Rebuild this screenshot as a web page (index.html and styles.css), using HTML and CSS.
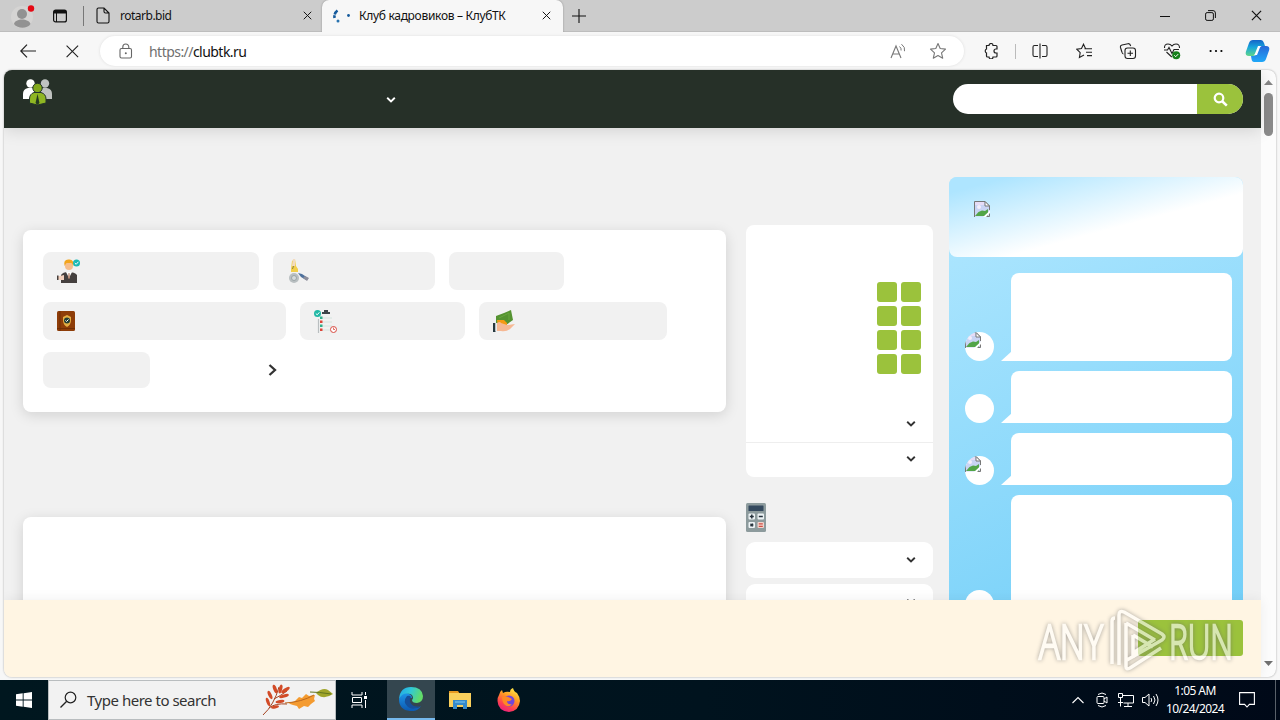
FILE: index.html
```html
<!DOCTYPE html>
<html lang="ru">
<head>
<meta charset="utf-8">
<title>Клуб кадровиков – КлубТК</title>
<link rel="stylesheet" href="styles.css">
</head>
<body>
<svg width="0" height="0" class="defs">
  <defs>
    <linearGradient id="cp1" x1="0" y1="0" x2="0" y2="1"><stop offset="0" stop-color="#1464c8"/><stop offset=".45" stop-color="#17a5dc"/><stop offset="1" stop-color="#5fd68a"/></linearGradient>
    <linearGradient id="cp2" x1="0" y1="0" x2="0" y2="1"><stop offset="0" stop-color="#2868d8"/><stop offset="1" stop-color="#20a8f8"/></linearGradient>
    <linearGradient id="eg1" x1="0" y1="0" x2="1" y2=".3"><stop offset="0" stop-color="#20a4e8"/><stop offset=".5" stop-color="#30c8d8"/><stop offset="1" stop-color="#62dc68"/></linearGradient>
    <linearGradient id="eg2" x1="0" y1="0" x2="0" y2="1"><stop offset="0" stop-color="#1d93e6"/><stop offset="1" stop-color="#0c58b0"/></linearGradient>
    <linearGradient id="ff" x1=".8" y1="0" x2=".3" y2="1"><stop offset="0" stop-color="#fff04a"/><stop offset=".4" stop-color="#ff9a24"/><stop offset=".75" stop-color="#ff4050"/><stop offset="1" stop-color="#e82080"/></linearGradient>
    <symbol id="down" viewBox="0 0 10 8"><path d="M1.2 1.8 5 5.4 8.8 1.8" fill="none" stroke="currentColor" stroke-width="1.9"/></symbol>
    <symbol id="broken" viewBox="0 0 16 16"><path d="M.5 .5h10.500l4.500 4.500v10.500H.5z" fill="#c9d4f4"/><path d="M1 1h9v3H1z" fill="#e6dcf6"/><path d="M1 15 4.500 11 8 9.500l3 .5 3-2v7z" fill="#52a548"/><circle cx="5" cy="6" r="2" fill="#f4eefb"/><path d="M.5 16V.5h10.500l4.500 4.500v4M15.500 12v3.500H10" fill="none" stroke="#777"/><path d="M11 .5V5h4.500z" fill="#fff" stroke="#777"/><path d="m9 16 7-6.500v2.500l-4 4z" fill="#fff"/></symbol>
    <symbol id="x" viewBox="0 0 12 12"><path d="m1 1 10 10M11 1 1 11" fill="none" stroke="#111" stroke-width="1.300"/></symbol>
  </defs>
</svg>

<header class="tabs">
  <svg class="avatar" width="26" height="28"><circle cx="12" cy="15" r="11" fill="#d5d4d3"/><circle cx="12" cy="12" r="5" fill="#929292"/><path d="M4 22c1-6 15-6 16.500 0-3 5-13 5-16.500 0z" fill="#929292"/><circle cx="21" cy="6.500" r="3.200" fill="#e50914"/></svg>
  <svg class="workspaces" width="16" height="16"><rect x="1.600" y="2.100" width="12.800" height="11.800" rx="2" fill="none" stroke="#111" stroke-width="1.200"/><path d="M2 2h12v3.500H2z" fill="#111"/><path d="M4.500 5v9" stroke="#111"/></svg>
  <i class="tab-rule"></i>
  <svg class="file" width="14" height="18"><path d="M1 2.500Q1 1 2.500 1H8l5 5v8.500q0 1.500-1.500 1.500h-9Q1 16 1 14.500zM8 1v3.500Q8 6 9.500 6H13" fill="none" stroke="#111" stroke-width="1.100"/></svg>
  <span class="tab-name rotarb">rotarb.bid</span>
  <svg class="close1" width="9" height="9"><use href="#x"/></svg>
  <div class="tab">
    <svg width="20" height="16"><path d="M6.500 2.500Q3 5 3.500 10" fill="none" stroke="#155a9c" stroke-width="2.600" stroke-dasharray="5 .7"/><circle cx="7" cy="13" r="1.500" fill="#2873af"/><circle cx="17.500" cy="7.500" r="1.400" fill="#155a9c"/></svg>
    <span class="tab-name">Клуб кадровиков – КлубТК</span>
    <svg class="close2" width="9" height="9"><use href="#x"/></svg>
  </div>
  <svg class="plus" width="14" height="14"><path d="M7 0v14M0 7h14" stroke="#111" stroke-width="1.100"/></svg>
  <div class="winbtns">
    <svg width="10" height="10"><path d="M0 5.500h10" stroke="#111"/></svg>
    <svg width="11" height="11"><rect x=".6" y="2.600" width="7.800" height="7.800" rx="1.500" fill="none" stroke="#111"/><path d="M3 .6h5Q10.400.6 10.400 3v5" fill="none" stroke="#111"/></svg>
    <svg width="11" height="11"><use href="#x"/></svg>
  </div>
</header>

<nav class="toolbar">
  <svg class="back" width="16" height="14"><path d="M16 7H.8M7 .7.8 7 7 13.300" fill="none" stroke="#222" stroke-width="1.200"/></svg>
  <svg class="stop" width="13" height="13"><path d="m.6.6 11.500 11.500M12.100.6.6 12.100" fill="none" stroke="#222" stroke-width="1.100"/></svg>
  <div class="address">
    <svg width="14" height="16"><rect x="1" y="5.500" width="11.500" height="9.500" rx="1.500" fill="none" stroke="#666" stroke-width="1.100"/><path d="M3.800 5.500V4a3 3 0 0 1 6 0v1.500" fill="none" stroke="#666" stroke-width="1.100"/><circle cx="6.800" cy="10.300" r="1" fill="#666"/></svg>
    <span class="url"><span>https://</span>clubtk.ru</span>
    <svg class="read" width="17" height="16"><path d="M1 15 6 3l5 12M2.800 11h6.400" fill="none" stroke="#777" stroke-width="1.100"/><path d="M9.500 3.500q2 1.500 1.600 4M11.500 1.200q4 3 3 7" fill="none" stroke="#777"/></svg>
    <svg class="star" width="18" height="18"><path d="m9 1.500 2.200 5 5.300.6-4 3.700 1.200 5.400L9 13.500l-4.700 2.700 1.200-5.400-4-3.700 5.300-.6z" fill="none" stroke="#777" stroke-width="1.100" stroke-linejoin="round"/></svg>
  </div>
  <div class="tools">
    <svg class="t1" width="16" height="16"><path d="M3.500 2.500H6a2 2 0 0 1 4 0h3q1 0 1 1V6h-1a2 2 0 0 0 0 4h1v3q0 1-1 1h-3a2 2 0 0 1-4 0H4.500q-1 0-1-1v-3a2.200 2.200 0 0 1 0-4z" fill="none" stroke="#222" stroke-width="1.200"/></svg>
    <i></i>
    <svg class="t2" width="16" height="16"><path d="M6 2.500H2.500q-1.500 0-1.500 1.500v8q0 1.500 1.500 1.500H6M10 2.500h3.500Q15 2.500 15 4v8q0 1.500-1.500 1.500H10M8 .5v15" fill="none" stroke="#222" stroke-width="1.100"/></svg>
    <svg class="t3" width="17" height="16"><path d="M9.500 5.500 7.500 1.200l-2 4.300-4.700.7 3.400 3.400-.8 4.900L8 12M8.500 5.800H16M10 9.200h6M11 12.600h5" fill="none" stroke="#222" stroke-width="1.100"/></svg>
    <svg class="t4" width="18" height="17"><rect x="6" y="5" width="10.500" height="10.500" rx="2.500" fill="none" stroke="#222" stroke-width="1.100"/><path d="M11.300 7.500v5.500M8.500 10.300H14M4.500 11q-1.200 0-1.600-2L1.500 4.500Q1 2.500 3 2l6-1.300q2-.4 2.700 2.300" fill="none" stroke="#222" stroke-width="1.100"/></svg>
    <svg class="t5" width="18" height="18"><path d="M1.500 6q-.2-4 3.500-4 2.500 0 4 2 1.500-2 4-2 3.600 0 3.500 4M3.500 10l5.300 5M1 8h3.500L6 5.500l3 6 2-4h5" fill="none" stroke="#222" stroke-width="1.100"/><circle cx="13.200" cy="13.300" r="4" fill="#16801b"/><path d="m11.300 13.300 1.400 1.400 2.500-2.600" fill="none" stroke="#fff"/></svg>
    <svg class="t6" width="14" height="4"><circle cx="1.600" cy="2" r="1.100"/><circle cx="7" cy="2" r="1.100"/><circle cx="12.400" cy="2" r="1.100"/></svg>
    <svg class="t7" width="25" height="24"><path d="M8 1h8q2 0 3 3l1 3h-4q-2 0-3 3l-2 5q-1 2-3 2H4Q0 17 .8 13L4 4q1-3 4-3z" fill="url(#cp1)"/><path d="M17 23H9q-2 0-2.500-3L6 17h3q2 0 3-3l2-5q1-2 3-2h4q4 0 3.200 4L21 20q-1 3-4 3z" fill="url(#cp2)"/><path d="M13 7h3q-1 1-2 4l-2 5H9q1-1 2-4z" fill="#fff"/></svg>
  </div>
</nav>

<main class="view">
  <div class="page">
    <div class="header">
      <svg class="logo" width="30" height="27"><circle cx="7.500" cy="4.500" r="4.200" fill="#fff"/><path d="M0 20v-5q0-5 5-6h5q4 1 4 6v5H2z" fill="#fff"/><circle cx="22" cy="4.500" r="4.200" fill="#bfc2c0"/><path d="M16 20v-5q0-5 4-6h4q5 1 5 6v5z" fill="#bfc2c0"/><circle cx="14.500" cy="9" r="4.700" fill="#83a91d" stroke="#24342a"/><path d="M6.500 24v-4q0-5 4.500-6.500h7q5 1.500 5 6.500v4L14.500 26z" fill="#8fb623" stroke="#24342a"/><path d="m14.500 15-2 9 2 2 2-2z" fill="#253a1f"/></svg>
      <svg class="menu-arrow" width="10" height="8"><use href="#down"/></svg>
      <div class="search"><span></span><b><svg width="15" height="15"><circle cx="6" cy="6" r="4.300" fill="none" stroke="#fff" stroke-width="2.200"/><path d="m9.200 9.200 4.600 4.400" stroke="#fff" stroke-width="2.600"/></svg></b></div>
    </div>

    <div class="content">
      <div class="left">
        <section class="card topics">
          <div class="chips">
            <span class="chip w216"><svg width="25" height="25"><path d="M4 24v-8q2-3 7-3 7 0 9 3v8z" fill="#45403f"/><path d="m9 13 3 6 3-6z" fill="#fff"/><path d="M11.500 14h1l.5 5-1 1-1-1z" fill="#b98b75"/><circle cx="12" cy="7" r="4" fill="#f6bd8b"/><path d="M7.500 7Q6 0 12 .5 17 0 16.500 7l-2-3h-5z" fill="#f2a51d"/><path d="M0 17h3l4-1v5H3l-3-1z" fill="#f3d0bd"/><path d="M0 16.500h1.500V21H0z" fill="#45403f"/><circle cx="19.500" cy="4" r="3.500" fill="#18b8b4"/><path d="m17.800 4 1.400 1.300 2.200-2.500" stroke="#fff" fill="none"/></svg></span>
            <span class="chip w162"><svg width="25" height="25"><path d="M4 2 7 0l1 7 2 3v3H3v-3z" fill="#f2cf4b"/><path d="M5 0h2v7H4z" fill="#f2dbc1"/><path d="m5.500 7-1 3" stroke="#8c8043"/><circle cx="6" cy="19" r="5" fill="#b9bfc1"/><circle cx="6" cy="19" r="2.500" fill="#d5dadb" stroke="#9ba4a7"/><path d="m10 14 4 1 6 4-2 2-5-3z" fill="#4e719d"/><path d="m17 17 4 2-2 3-4-3z" fill="#8d8e9b"/></svg></span>
            <span class="chip w115"></span>
            <span class="chip w243"><svg width="25" height="25"><rect y="2" width="18" height="20" rx="1.500" fill="#8e3d08"/><path d="M3 2v20M0 19.500h18" stroke="#6f2c05" stroke-width=".9"/><path d="m6 8 4-2 4 2v3q0 5-4 7-4-2-4-7z" fill="#e4ae43"/><circle cx="10" cy="11.500" r="3" fill="#253f35"/><path d="m8.500 11.500 1 1 2-2" stroke="#fff" fill="none"/></svg></span>
            <span class="chip w165"><svg width="25" height="25"><circle cx="3.500" cy="4.500" r="3.500" fill="#20b8a5"/><path d="m1.800 4.500 1.400 1.300 2.200-2.500" stroke="#fff" fill="none"/><path d="M8 4V3h2V1h4v2h2v2H8z" fill="#3d4449"/><path d="M4.500 10v14" stroke="#b9bec0" stroke-width="1.200"/><path d="M8 9h10M8 13h10M8 17h10M8 21h8" stroke="#cfe2dc" stroke-width=".8"/><path d="M6 7.500h2.500V10H6zM6 15.500h2.500V18H6z" fill="#31ae8a"/><path d="M6 11.500h2.500V14H6zM6 19.500h2.500V22H6z" fill="#dd4438"/><circle cx="19.500" cy="20.500" r="3" fill="#fff" stroke="#d84b42"/><path d="M19.500 18.500v2h1.500" stroke="#d84b42" fill="none" stroke-width=".8"/></svg></span>
            <span class="chip w188"><svg width="25" height="25"><path d="m3 7 8-3 7-3 2 10-7 5H3z" fill="#559331"/><path d="m6 9 10-5v7" stroke="#68a63d" fill="none"/><path d="M4 11h7l3 3v3H5z" fill="#f49a13"/><path d="M4 14q3-2 4 0l6 2 8-1-5 5q-4 3-9 2H4z" fill="#f6b893"/><path d="M0 14h2.500v9H0z" fill="#273940"/><path d="M2.500 14H4v8H2.500z" fill="#e9edef"/></svg></span>
            <span class="chip w107"></span>
            <svg class="next" width="10" height="12"><path d="m1.500 1 5.500 5-5.500 5" fill="none" stroke="#333" stroke-width="2.300"/></svg>
          </div>
        </section>
        <section class="card feed"></section>
      </div>

      <aside class="mid">
        <section class="calendar">
          <div class="grid"><i></i><i></i><i></i><i></i><i></i><i></i><i></i><i></i></div>
          <div class="fold first"><svg width="10" height="8"><use href="#down"/></svg></div>
          <div class="fold"><svg width="10" height="8"><use href="#down"/></svg></div>
        </section>
        <svg class="calc" width="20" height="29"><rect width="20" height="29" rx="1.500" fill="#8d9b9d"/><rect x="2.500" y="2.500" width="15" height="5.500" rx=".5" fill="#34495e"/><rect x="2.500" y="10.500" width="6.500" height="6" rx="1" fill="#edf3f5"/><rect x="11.500" y="10.500" width="6.500" height="6" rx="1" fill="#edf3f5"/><rect x="2.500" y="19" width="6.500" height="6" rx="1" fill="#edf3f5"/><rect x="11.500" y="19" width="6.500" height="6" rx="1" fill="#f2d2cb"/><path d="M3.800 13.500h4M5.800 11.500v4M12.800 13.500h4" stroke="#26323c" stroke-width="1.500"/><path d="m4.500 20.700 2.600 2.600M7.100 20.700l-2.600 2.600" stroke="#26323c" stroke-width="1.500"/><path d="M12.800 20.900h4M12.800 23.300h4" stroke="#cf5146" stroke-width="1.200"/></svg>
        <div class="accordion"><svg width="10" height="8"><use href="#down"/></svg></div>
        <div class="accordion"><svg width="10" height="8"><use href="#down"/></svg></div>
      </aside>

      <aside class="chat">
        <div class="chat-head"><svg width="16" height="16"><use href="#broken"/></svg></div>
        <div class="message m88"><span class="face"><svg width="16" height="16"><use href="#broken"/></svg></span><p></p></div>
        <div class="message m52"><span class="face"></span><p></p></div>
        <div class="message m52"><span class="face"><svg width="16" height="16"><use href="#broken"/></svg></span><p></p></div>
        <div class="message m124"><span class="face"></span><p></p></div>
      </aside>
    </div>

    <div class="cookie"><span class="accept"></span></div>
  </div>
  <div class="scroll">
    <svg width="9" height="5"><path d="M0 5 4.500 0 9 5z" fill="#858585"/></svg>
    <i></i>
    <svg class="sdown" width="9" height="5"><path d="m0 0 4.500 5L9 0z" fill="#707070"/></svg>
  </div>
</main>

<footer class="taskbar">
  <div class="start"><svg width="16" height="16"><path d="m0 2.300 6.700-1v6.200H0zM7.600 1.200 16 0v7.500H7.600zM0 8.500h6.700v6.200L0 13.700zM7.600 8.500H16V16l-8.400-1.200z" fill="#fff"/></svg></div>
  <div class="tsearch">
    <svg width="18" height="18"><circle cx="10.500" cy="6.500" r="5.300" fill="none" stroke="#222" stroke-width="1.200"/><path d="M6.700 10.300.5 16.500" stroke="#222" stroke-width="1.300"/></svg>
    <span>Type here to search</span>
    <svg class="leaves" width="72" height="34" viewBox="0 0 72 34"><g fill="none" stroke="#a54422"><path d="M1 32Q12 22 17 4M7 25q6-5 18-4M12 16q6-3 13-8"/></g><g fill="#d24b27"><ellipse cx="13" cy="6" rx="1.800" ry="4.500" transform="rotate(-20 13 6)"/><ellipse cx="18.500" cy="6" rx="1.700" ry="4.500" transform="rotate(15 18.500 6)"/><ellipse cx="23.500" cy="7" rx="1.700" ry="5" transform="rotate(55 23.500 7)"/><ellipse cx="22" cy="13" rx="1.600" ry="5" transform="rotate(75 22 13)"/><ellipse cx="8" cy="12" rx="1.700" ry="4.500" transform="rotate(-25 8 12)"/><ellipse cx="6" cy="19" rx="1.600" ry="4.500" transform="rotate(-20 6 19)"/><ellipse cx="18" cy="18.500" rx="1.600" ry="4.500" transform="rotate(80 18 18.500)"/><ellipse cx="13" cy="24" rx="1.500" ry="4" transform="rotate(80 13 24)"/></g><path d="M27 20l6-2 4-4 3 1 4-4 3 2 6-1-1 4 1 2-4 3-3 3-4-1-5 3-2-3-4-1-3-1z" fill="#f49b30"/><path d="M23 20q17-1 29-8" stroke="#bd681e" fill="none"/><path d="M54 10q7-6 12-3l5 4q-9 6-15 1z" fill="#a0a52a"/><path d="M48 9q9 0 21 2" stroke="#62751d" fill="none"/></svg>
  </div>
  <div class="app"><svg width="18" height="16"><path d="M1 0v3h10V0M1 16v-3h10v3M1.500 5.500h9v5h-9zM14.500 0v3M14.500 8v8" fill="none" stroke="#fff"/><path d="M13 4h3v3h-3z" fill="#fff"/></svg></div>
  <div class="app active"><svg width="24" height="24" viewBox="0 0 24 24"><path d="M0 12Q1 0 12 0q11 0 12 9 0 6-6 7-5 0-5-3 2-2 0-5Q8 4 0 12z" fill="url(#eg1)"/><path d="M0 12q4-7 10-5 3 1 3 4-4-1-4 4 1 6 8 6 3 0 5-2-4 6-11 5Q0 23 0 12z" fill="url(#eg2)"/><path d="M8 9q-5 6 1 11 5 4 13-1-8 2-11-4-1-3 1-5-1-2-4-1z" fill="#164f99"/></svg></div>
  <div class="app"><svg width="22" height="20"><path d="M0 1h9l2 3H0z" fill="#e79921"/><path d="M0 3h22v14H0z" fill="#f9cf5c"/><path d="M4 10h14v9h-4v-4H8v4H4z" fill="#3489cb"/><path d="M6 11h10v2H6z" fill="#59a9df"/></svg></div>
  <div class="app"><svg width="24" height="24"><path d="M2 7q1-4 3-5l1 3q3-2 7-1 0-3 3-4 1 4 4 5 3 4 3 8-1 10-11 11Q1 23 .5 13q0-4 1.500-6z" fill="url(#ff)"/><circle cx="12" cy="13" r="5.500" fill="#7146dc"/><path d="M5 9q4-2 8 1l2 1q-2 3-5 2 0 4 5 3-3 4-7 1-3-3-3-8z" fill="#ff8924"/></svg></div>
  <div class="tray">
    <svg class="up" width="12" height="8"><path d="m.5 7 5.500-5.500L11.500 7" fill="none" stroke="#fff" stroke-width="1.100"/></svg>
    <svg class="cam" width="12" height="16"><rect x="1" y="4.500" width="7" height="7" rx="1" fill="none" stroke="#fff"/><path d="m8 7 3-2v6L8 9M2 2.500Q6-.5 10 2.500M2 13.500q4 3 8 0" fill="none" stroke="#fff"/></svg>
    <svg class="net" width="16" height="14"><path d="M5 2.500h10.500v7.500h-10M10 10v3M6 13.500h8M.5.5h4v4h-4zM2.500 4.500v9M0 9.500h5" fill="none" stroke="#fff"/></svg>
    <svg class="vol" width="17" height="14"><path d="M.5 4.500H3l4-3.500v12L3 9.500H.5zM9 5q1.500 2 0 4M11.500 3q3 4 0 8M14 1q4 6 0 12" fill="none" stroke="#fff"/></svg>
    <div class="clock"><span>1:05 AM</span><span>10/24/2024</span></div>
    <svg class="note" width="16" height="16"><path d="M.6.6h14.800v11.800h-5L8 15l-2.400-2.600h-5z" fill="none" stroke="#fff" stroke-width="1.100"/></svg>
    <i></i>
  </div>
</footer>

<svg class="watermark" width="230" height="76" viewBox="0 0 230 76">
  <g class="mark-text"><text x="7" y="55" textLength="64" lengthAdjust="spacingAndGlyphs">ANY</text><text x="137" y="55" textLength="64" lengthAdjust="spacingAndGlyphs">RUN</text></g>
  <g class="mark"><path d="M80 60V17q0-3 3-3M87 61V11q0-5 5-3l38 22q4 3 0 6L95 56M94 19v44q0 3 4 1l31-20M94 19l29 17M101 31l20 12M101 49l22-14M101 31v23"/></g>
</svg>
</body>
</html>
```
FILE: styles.css
```css
* { box-sizing: border-box; }
body { margin: 0; width: 1280px; height: 720px; overflow: hidden; display: flex; flex-direction: column; position: relative; background: #f7f7f7; font-family: "Noto Sans", "Open Sans", sans-serif; font-size: 12px; color: #111; }
svg { display: block; flex: none; }
.defs { position: absolute; }

.tabs { height: 32px; flex: none; display: flex; align-items: center; background: #ccc; border-bottom: 1px solid #bdbdbd; }
.avatar { margin-left: 10px; }
.workspaces { margin-left: 16px; }
.tab-rule { width: 1px; height: 20px; margin-left: 15px; background: #777; }
.file { margin: 0 0 0 12px; }
.tab-name { white-space: nowrap; letter-spacing: -.3px; }
.rotarb { width: 182px; margin-left: 10px; letter-spacing: -.5px; }
.close1 { margin-left: 1px; }
.tab { align-self: stretch; width: 241px; height: 32px; margin-left: 10px; padding: 0 0 1px 9px; display: flex; flex: none; align-items: center; background: #f7f7f7; border-radius: 7px 7px 0 0; box-shadow: 0 0 2px #888; clip-path: inset(0 -3px 0 -3px); }
.tab .tab-name { width: 183px; margin-left: 8px; }
.close1, .close2 { width: 9px; height: 9px; }
.plus { margin-left: 9px; }
.winbtns { margin-left: auto; padding-right: 18px; display: flex; align-items: center; gap: 35px; }

.toolbar { height: 38px; flex: none; display: flex; align-items: center; }
.back { margin-left: 20px; }
.stop { margin-left: 30px; }
.address { width: 864px; height: 30px; margin-left: 21px; padding-left: 19px; display: flex; align-items: center; border-radius: 15px; background: #fff; box-shadow: 0 0 3px #ddd; }
.url { width: 742px; margin-left: 16px; font-size: 14px; letter-spacing: -.54px; }
.url span { color: #707070; }
.read { margin-left: -1px; }
.star { margin-left: 22px; }
.tools { display: flex; align-items: center; }
.tools i { width: 1px; height: 15px; margin-left: 16px; background: #bbb; }
.t1 { margin-left: 19px; }
.t2 { margin-left: 16px; }
.t3 { margin-left: 28px; }
.t4 { margin-left: 26px; }
.t5 { margin-left: 26px; }
.t6 { margin-left: 28px; }
.t7 { margin-left: 22px; }

.view { height: 607px; flex: none; margin: 0 4px 3px; display: flex; overflow: hidden; border-radius: 8px; background: #fcfcfc; box-shadow: 0 0 2px #999; }
.page { width: 1257px; display: flex; flex-direction: column; background: #f1f1f1; }
.header { height: 58px; flex: none; display: flex; align-items: center; padding: 0 18px 0 19px; background: #263028; box-shadow: 0 2px 16px #0002; z-index: 1; }
.logo { align-self: flex-start; margin-top: 9px; }
.menu-arrow { margin: 1px 0 0 333px; color: #fff; }
.search { display: flex; width: 290px; height: 30px; margin-left: auto; border-radius: 15px; overflow: hidden; background: #fff; }
.search span { flex: 1; }
.search b { width: 46px; display: flex; align-items: center; justify-content: center; background: #9bc23c; }
.content { height: 472px; flex: none; overflow: hidden; display: grid; grid-template-columns: 703px 187px 294px; column-gap: 20px; padding-left: 19px; align-items: start; }
.left { padding-top: 102px; }
.card { background: #fff; border-radius: 8px; box-shadow: 0 3px 14px #0002; }
.topics { height: 182px; padding: 22px 20px; }
.chips { display: flex; flex-wrap: wrap; width: 640px; gap: 12px 14px; }
.chip { height: 38px; display: flex; align-items: center; padding-left: 14px; border-radius: 8px; background: #f1f1f1; }
.w216 { width: 216px; } .w162 { width: 162px; padding-left: 15px; } .w115 { width: 115px; }
.w243 { width: 243px; } .w165 { width: 165px; } .w188 { width: 188px; }
.w107 { width: 107px; height: 36px; }
.next { margin: 12px 0 0 104px; }
.feed { height: 120px; margin-top: 105px; }
.mid { padding-top: 97px; }
.calendar { height: 252px; padding-top: 57px; border-radius: 8px; background: #fff; }
.grid { display: grid; grid-template-columns: 20px 20px; grid-auto-rows: 20px; gap: 4px; margin-left: 131px; }
.grid i { border-radius: 3px; background: #9bc23c; }
.fold { height: 32px; display: flex; align-items: center; justify-content: flex-end; padding-right: 17px; color: #333; }
.fold.first { height: 37px; margin-top: 32px; border-bottom: 1px solid #eee; }
.calc { margin: 26px 0 10px; }
.accordion { height: 36px; margin-bottom: 6px; display: flex; align-items: center; justify-content: flex-end; padding-right: 17px; border-radius: 9px; background: #fff; color: #333; }
.chat { width: 294px; margin: 49px 0 0 -4px; min-height: 450px; border-radius: 8px; background: linear-gradient(155deg, #b3e8ff, #70cef8); }
.chat-head { height: 80px; margin-bottom: 16px; padding: 24px 25px; border-radius: 8px; background: linear-gradient(165deg, #aee5ff 10%, #fff 60%); }
.message { display: flex; align-items: flex-end; margin: 0 11px 10px 16px; }
.message p { width: 221px; height: 100%; margin: 0 0 0 17px; background: #fff; border-radius: 8px 8px 8px 0; position: relative; }
.message p::before { content: ""; position: absolute; left: -10px; bottom: 0; width: 11px; height: 10px; background: #fff; clip-path: polygon(100% 0, 100% 100%, 0 100%); }
.m88 { height: 88px; } .m52 { height: 52px; } .m124 { height: 124px; }
.face { width: 29px; height: 29px; flex: none; border-radius: 50%; background: #fff; overflow: hidden; }
.cookie { height: 77px; flex: none; display: flex; justify-content: flex-end; padding: 20px 18px 0; background: #fff5e3; box-shadow: 0 0 12px #0001; z-index: 1; }
.accept { width: 105px; height: 36px; border-radius: 3px; background: #9bc23c; }
.scroll { width: 15px; display: flex; flex-direction: column; align-items: center; padding: 10px 0 11px; }
.scroll i { width: 9px; height: 43px; margin-top: 8px; border-radius: 5px; background: #8b8b8b; }
.sdown { margin-top: auto; }

.taskbar { height: 40px; flex: none; display: flex; color: #fff; background: linear-gradient(90deg, #00171f, #00131e 55%, #000918); }
.start { width: 48px; display: flex; align-items: center; justify-content: center; }
.tsearch { width: 288px; display: flex; align-items: center; padding-left: 11px; background: #f2f2f2; border: 1px solid #b9bdbf; }
.tsearch span { width: 176px; margin-left: 9px; color: #333; font-size: 15px; letter-spacing: -.48px; white-space: nowrap; }
.leaves { margin-left: -1px; }
.app { width: 48px; display: flex; align-items: center; justify-content: center; }
.app + .app { margin-left: 1px; }
.app + .active { margin-left: 3px; }
.active { background: #34464f; border-bottom: 2px solid #76b9ed; }
.tray { flex: 1; display: flex; align-items: center; justify-content: flex-end; }
.cam { margin-left: 12px; }
.net { margin-left: 10px; }
.vol { margin-left: 8px; }
.clock { width: 72px; display: flex; flex-direction: column; align-items: center; font-size: 12px; line-height: 18px; letter-spacing: -.57px; white-space: nowrap; }
.note { margin-left: 8px; }
.tray i { width: 1px; height: 40px; margin: 0 4px 0 20px; background: #59616a; }

.watermark { position: absolute; z-index: 2; left: 1032px; top: 604px; filter: drop-shadow(0 0 2px #666); opacity: .6; }
.mark-text { font: 300 48px "Open Sans", sans-serif; fill: #fff; stroke: #fff; stroke-width: 2.4; }
.mark { fill: none; stroke: #fff; stroke-width: 3.5; stroke-linejoin: round; }
```
